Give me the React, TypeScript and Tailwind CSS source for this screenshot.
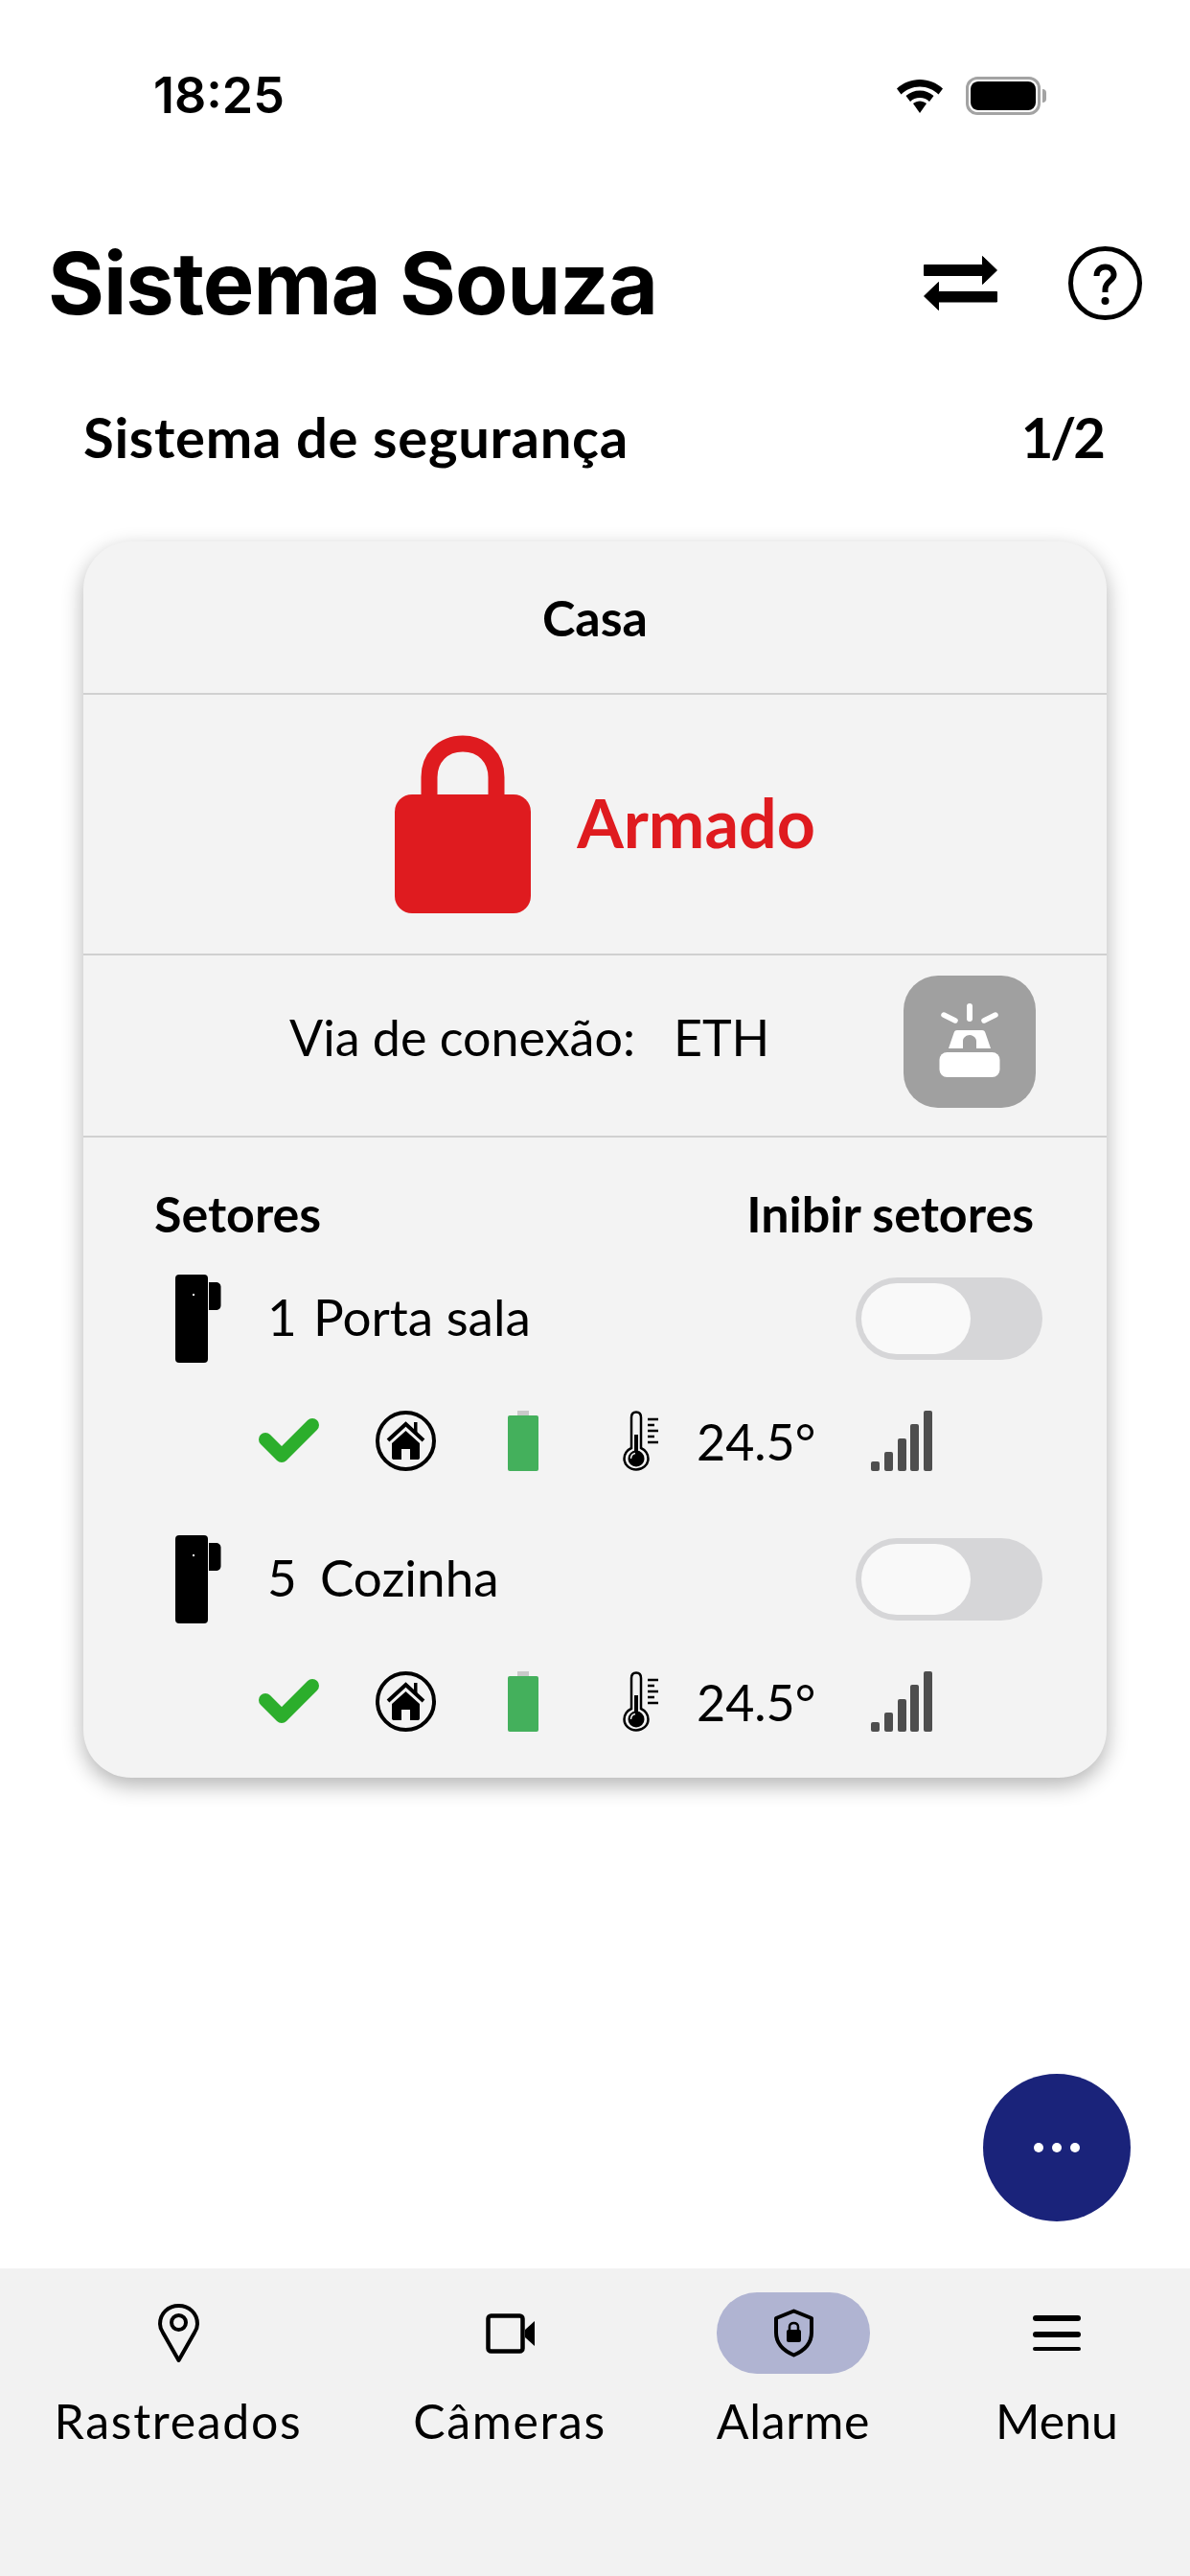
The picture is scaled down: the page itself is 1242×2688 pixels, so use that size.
import React from 'react'

const sans = "font-['Lato','Noto_Sans',sans-serif]"
const display = "font-['Inter','Liberation_Sans',sans-serif]"

const Wifi = () => (
  <svg width="52" height="40" viewBox="0 0 52 40" fill="#000">
    <path d="M26 3C35 3 43.500 6.500 50 12.500L45.500 18.500C40.500 13.500 33.500 10.500 26 10.500C18.500 10.500 11.500 13.500 6.500 18.500L2 12.500C8.500 6.500 17 3 26 3Z" />
    <path d="M26 14.500C31.500 14.500 36.500 16.500 40.500 20L36 26C33.500 23.500 30 22 26 22C22 22 18.500 23.500 16 26L11.500 20C15.500 16.500 20.500 14.500 26 14.500Z" />
    <path d="M26 25.500C28.500 25.500 31 26.500 33 28L26 38L19 28C21 26.500 23.500 25.500 26 25.500Z" />
  </svg>
)

const Battery = () => (
  <div className="flex items-center">
    <div className="flex h-[40px] w-[78px] items-center justify-center rounded-[12px] border-[3px] border-[#a3a3a3] bg-white">
      <div className="h-[30px] w-[68px] rounded-[8px] bg-black" />
    </div>
    <div className="ml-[2px] h-[14px] w-[4px] rounded-r-full bg-[#a3a3a3]" />
  </div>
)

const Swap = () => (
  <svg width="77" height="57" viewBox="0 0 77 57" fill="#000" stroke="#000" strokeWidth="1" strokeLinejoin="round">
    <path d="M0.500 9.500H61.500V0.500L76.500 15L61.500 29.500V20.500H0.500Z" />
    <path d="M76.500 37.500H15.500V27.500L0.500 42L15.500 56.500V48H76.500Z" />
  </svg>
)

const Help = () => (
  <svg width="77" height="77" viewBox="0 0 77 77" fill="none">
    <circle cx="38.500" cy="38.500" r="36" stroke="#000" strokeWidth="5" />
    <path d="M29.500 31C29.500 25 33.500 21.500 38.500 21.500C44 21.500 47.500 25 47.500 30C47.500 36 38.500 36.500 38.500 45V48" stroke="#000" strokeWidth="6" />
    <circle cx="38.500" cy="57" r="4" fill="#000" />
  </svg>
)

const Lock = () => (
  <svg width="142" height="186" viewBox="0 0 142 186">
    <path d="M36 70V44C36 24 50 9 71 9C92 9 106 24 106 44V70" fill="none" stroke="#df1b1f" strokeWidth="17" />
    <rect x="0" y="62" width="142" height="124" rx="18" fill="#df1b1f" />
  </svg>
)

const Siren = () => (
  <svg width="66" height="80" viewBox="0 0 66 80" fill="#fff">
    <rect x="30" y="0" width="6" height="19" rx="3" />
    <path d="M6 12L18 18" stroke="#fff" strokeWidth="5.500" strokeLinecap="round" />
    <path d="M60 12L48 18" stroke="#fff" strokeWidth="5.500" strokeLinecap="round" />
    <path fillRule="evenodd" d="M20 28H46C48 28 49 29 49.500 31L55 47H11L16.500 31C17 29 18 28 20 28ZM26 47H40V39C40 36 36.500 33 33 33C29.500 33 26 36 26 39Z" />
    <rect x="1.500" y="51" width="63" height="26" rx="8" />
  </svg>
)

const Sensor = () => (
  <svg width="48" height="92" viewBox="0 0 48 92">
    <rect x="0" y="0" width="34" height="92" rx="4" fill="#000" />
    <path d="M35 8H42C45.500 8 47.500 10 47.500 13V32C47.500 35 45.500 37 42 37H35Z" fill="#000" />
    <rect x="18" y="20" width="2" height="2" fill="#fff" />
  </svg>
)

const Check = () => (
  <svg width="63" height="49" viewBox="0 0 63 49">
    <path d="M7 23L24 40L56 8" fill="none" stroke="#2cae2c" strokeWidth="14" strokeLinejoin="round" strokeLinecap="round" />
  </svg>
)

const Home = () => (
  <svg width="63" height="63" viewBox="0 0 63 63" fill="#000">
    <circle cx="31.500" cy="31.500" r="29.500" fill="none" stroke="#000" strokeWidth="4" />
    <path d="M13 31L31.500 14L50 31" fill="none" stroke="#000" strokeWidth="4" />
    <rect x="40" y="12" width="3.500" height="11" />
    <path d="M31.500 21L46 34V49C46 50.500 45 51 44 51H36V40H27V51H19C18 51 17 50.500 17 49V34Z" />
  </svg>
)

const BatteryFull = () => (
  <div className="flex h-[63px] w-[32px] flex-col items-center">
    <div className="h-[5px] w-[12px] bg-[#c9c9c9]" />
    <div className="w-full flex-1 rounded-[2px] bg-[#44b05c]" />
  </div>
)

const Thermometer = () => (
  <svg width="38" height="63" viewBox="0 0 38 63">
    <path d="M9 39V7C9 3.500 11 1.500 14 1.500C17 1.500 19 3.500 19 7V39C23.500 41 26.500 45.500 26.500 50C26.500 56.500 21 61.500 14 61.500C7 61.500 1.500 56.500 1.500 50C1.500 45.500 4.500 41 9 39Z" fill="none" stroke="#000" strokeWidth="2.500" />
    <rect x="12" y="25" width="4" height="22" fill="#000" />
    <circle cx="14" cy="50" r="8.500" fill="#000" />
    <path d="M8.500 50C8.500 47 10.500 45 13 44.500" fill="none" stroke="#f3f3f3" strokeWidth="1.500" />
    <path d="M26 9H37M26 15H33M26 21H37M26 27H33M26 33H37" stroke="#000" strokeWidth="2.500" />
  </svg>
)

const Signal = () => (
  <div className="flex h-[63px] w-[64px] items-end justify-between">
    <div className="h-[10px] w-[9px] rounded-[2px] bg-[#4e4e4e]" />
    <div className="h-[20px] w-[9px] rounded-[2px] bg-[#4e4e4e]" />
    <div className="h-[34px] w-[9px] rounded-[2px] bg-[#4e4e4e]" />
    <div className="h-[49px] w-[9px] rounded-[2px] bg-[#4e4e4e]" />
    <div className="h-[63px] w-[9px] rounded-[2px] bg-[#4e4e4e]" />
  </div>
)

const Pin = () => (
  <svg width="43" height="62" viewBox="0 0 43 62" fill="none" stroke="#000" strokeWidth="4">
    <path d="M21.500 59L5 30C3 27 2 24 2 21C2 10 10.500 2 21.500 2C32.500 2 41 10 41 21C41 24 40 27 38 30Z" strokeLinejoin="round" />
    <circle cx="21.500" cy="19.500" r="7.500" />
  </svg>
)

const Camera = () => (
  <svg width="51" height="42" viewBox="0 0 51 42">
    <rect x="2.500" y="2.500" width="36" height="37" rx="3" fill="none" stroke="#000" strokeWidth="4.500" />
    <path d="M41 17L51 8V34L41 25Z" fill="#000" />
  </svg>
)

const ShieldLock = () => (
  <svg width="41" height="51" viewBox="0 0 41 51">
    <path d="M20.500 2.500L39 10V25C39 36 31 44 20.500 48.500C10 44 2 36 2 25V10Z" fill="none" stroke="#000" strokeWidth="4" strokeLinejoin="round" />
    <rect x="13" y="22" width="15" height="13" rx="2" fill="#000" />
    <path d="M16 23V19C16 16.500 18 15 20.500 15C23 15 25 16.500 25 19V23" fill="none" stroke="#000" strokeWidth="2.500" />
  </svg>
)

const MenuIcon = () => (
  <div className="flex h-[37px] w-[50px] flex-col justify-between">
    <div className="h-[6px] rounded-full bg-black" />
    <div className="h-[6px] rounded-full bg-black" />
    <div className="h-[4px] rounded-full bg-black" />
  </div>
)

const Toggle = () => (
  <div className="flex h-[86px] w-[195px] items-center rounded-full bg-[#d6d6d8] pl-[6px]">
    <div className="h-[74px] w-[114px] rounded-full bg-[#f9f9f9]" />
  </div>
)

const Sector = ({ number, name, numberWidth }: { number: string; name: string; numberWidth: string }) => (
  <div>
    <div className="flex h-[92px] items-center pl-[96px] pr-[67px]">
      <Sensor />
      <p className={`mb-[4px] ml-[48px] flex flex-1 text-[53px] text-black ${sans}`}>
        <span className={numberWidth}>{number}</span>
        <span>{name}</span>
      </p>
      <Toggle />
    </div>
    <div className="mt-[50px] flex h-[63px] items-center pl-[183px]">
      <Check />
      <div className="ml-[59px]">
        <Home />
      </div>
      <div className="ml-[75px]">
        <BatteryFull />
      </div>
      <div className="ml-[88px]">
        <Thermometer />
      </div>
      <p className={`ml-[39px] w-[182px] text-[52px] text-black ${sans}`}>24.5°</p>
      <Signal />
    </div>
  </div>
)

const Tab = ({ label, width, spacing, children }: { label: string; width: string; spacing: string; children: React.ReactNode }) => (
  <div className={`flex flex-col items-center ${width}`}>
    <div className="flex h-[85px] items-center justify-center">{children}</div>
    <p className={`mt-[21px] text-[50px] leading-[56px] text-black ${sans} ${spacing}`}>{label}</p>
  </div>
)

export default function App() {
  return (
    <div className="flex h-[2688px] w-[1242px] flex-col overflow-hidden bg-white">
      {/* status bar */}
      <div className="flex h-[200px] shrink-0 items-center justify-between pl-[160px] pr-[150px]">
        <span className={`text-[52px] font-semibold text-black ${display}`}>18:25</span>
        <div className="flex items-center gap-[22px]">
          <Wifi />
          <Battery />
        </div>
      </div>

      {/* title */}
      <div className="flex h-[190px] shrink-0 items-center justify-between pl-[50px] pr-[50px]">
        <h1 className={`text-[90px] font-bold tracking-[-1px] text-black ${display}`}>Sistema Souza</h1>
        <div className="flex items-center gap-[74px]">
          <Swap />
          <Help />
        </div>
      </div>

      <div className="flex h-[130px] shrink-0 items-center justify-between pl-[87px] pr-[88px]">
        <h2 className={`text-[58px] font-bold tracking-[0.7px] text-black ${sans}`}>Sistema de segurança</h2>
        <span className={`mr-[3px] text-[58px] font-bold tracking-[-3px] text-black ${sans}`}>1/2</span>
      </div>

      {/* card */}
      <div className="mx-[87px] mt-[45px] h-[1290px] shrink-0 rounded-[50px] bg-[#f3f3f3] shadow-[0_8px_22px_rgba(0,0,0,0.3)]">
        <div className="flex h-[160px] items-center justify-center border-b-2 border-[#d0d0d0]">
          <p className={`text-[52px] font-bold text-black ${sans}`}>Casa</p>
        </div>
        <div className="flex h-[272px] items-center justify-center border-b-2 border-[#d0d0d0] pl-[21px]">
          <Lock />
          <p className={`mb-[4px] ml-[48px] text-[70px] font-bold text-[#df1b1f] ${sans}`}>Armado</p>
        </div>
        <div className="flex h-[190px] items-center border-b-2 border-[#d0d0d0] pb-[8px] pl-[215px]">
          <p className={`mb-[10px] whitespace-pre text-[52px] text-black ${sans}`}>Via de conexão:{'   '}ETH</p>
          <div className="ml-auto mr-[74px] flex h-[138px] w-[138px] items-center justify-center rounded-[36px] bg-[#a0a0a0]">
            <Siren />
          </div>
        </div>
        <div className="flex h-[110px] items-end justify-between pl-[74px] pr-[76px]">
          <p className={`text-[52px] font-bold leading-[62px] text-black ${sans}`}>Setores</p>
          <p className={`text-[52px] font-bold leading-[62px] text-black ${sans}`}>Inibir setores</p>
        </div>
        <div className="mt-[33px] flex flex-col gap-[67px]">
          <Sector number="1" name="Porta sala" numberWidth="w-[48px]" />
          <Sector number="5" name="Cozinha" numberWidth="w-[55px]" />
        </div>
      </div>

      {/* fab */}
      <div className="flex flex-1 items-end justify-end pb-[49px] pr-[62px]">
        <button className="flex h-[154px] w-[154px] items-center justify-center gap-[9px] rounded-full bg-[#1a237a]">
          <span className="h-[10px] w-[10px] rounded-full bg-white" />
          <span className="h-[10px] w-[10px] rounded-full bg-white" />
          <span className="h-[10px] w-[10px] rounded-full bg-white" />
        </button>
      </div>

      {/* bottom tabs */}
      <div className="flex h-[321px] shrink-0 bg-[#f2f2f2] pt-[25px]">
        <Tab label="Rastreados" width="w-[372px]" spacing="tracking-[1.7px]">
          <Pin />
        </Tab>
        <Tab label="Câmeras" width="w-[320px]" spacing="tracking-[1.6px]">
          <Camera />
        </Tab>
        <Tab label="Alarme" width="w-[272px]" spacing="tracking-[0.7px]">
          <div className="flex h-[85px] w-[160px] items-center justify-center rounded-[42px] bg-[#b0b4d2]">
            <ShieldLock />
          </div>
        </Tab>
        <Tab label="Menu" width="w-[278px]" spacing="tracking-normal">
          <MenuIcon />
        </Tab>
      </div>
    </div>
  )
}
